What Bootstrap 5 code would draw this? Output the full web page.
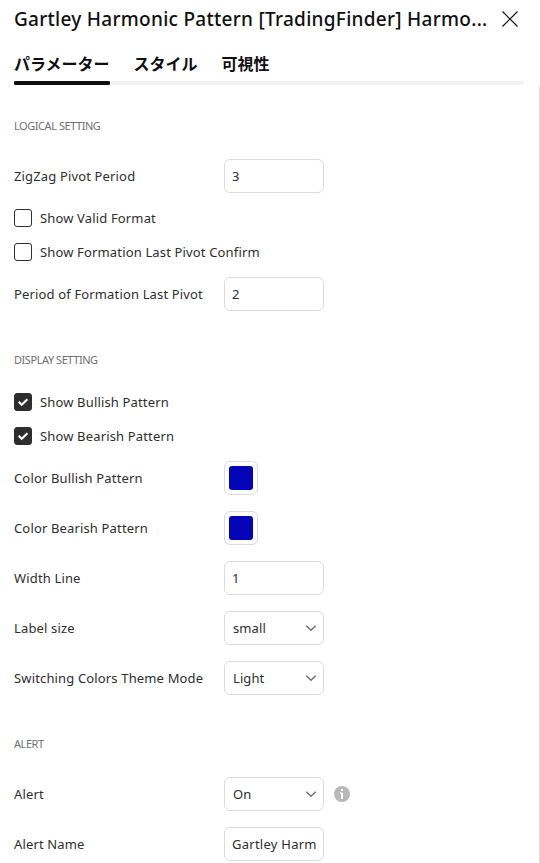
<!DOCTYPE html>
<html lang="ja">
<head>
<meta charset="utf-8">
<meta name="viewport" content="width=device-width, initial-scale=1">
<title>Gartley Harmonic Pattern</title>
<link rel="stylesheet" href="https://cdn.jsdelivr.net/npm/bootstrap@5.3.0/dist/css/bootstrap.min.css">
<style>
body{font-family:"Trebuchet MS","Noto Sans","Noto Sans CJK JP",sans-serif;font-size:13px;line-height:18px;letter-spacing:.15px;color:#2e2e2e;background:#fff}
.dialog{height:863px}
.dialog-head{height:40px;padding:0 20px 2px 14px}
.dialog-title{width:476px;font-size:19px;line-height:28px;font-weight:500;letter-spacing:.28px;color:#0f0f0f}
.close-btn{width:20px;height:20px}
.tabs{height:45px;margin:0 16px 0 14px;gap:24px;font-family:"Noto Sans CJK JP",sans-serif;line-height:24px;letter-spacing:0;font-weight:700;color:#0f0f0f;background:linear-gradient(#f2f2f2,#f2f2f2) bottom/100% 4px no-repeat}
.tabs .nav-link{padding:11px 0 6px;height:45px;color:inherit;font-size:16px}
.tabs .nav-link.active{background:radial-gradient(circle at 2px 2px,#0f0f0f 2px,transparent 2.3px) left bottom/4px 4px no-repeat,radial-gradient(circle at 2px 2px,#0f0f0f 2px,transparent 2.3px) right bottom/4px 4px no-repeat,linear-gradient(#0f0f0f,#0f0f0f) center bottom/calc(100% - 4px) 4px no-repeat}
.settings{height:778px;padding:24px 14px 0;gap:16px}
.scroll-edge{width:1px;margin-top:1px;background:#dedede}
.group-title{height:34px;font-size:11px;letter-spacing:-.45px;color:#707070}
.group-gap{margin-top:16px}
.setting{height:34px}
.setting-label{width:210px}
.field{width:100px;height:34px;padding:0 7px;border:1px solid #dbdbdb;border-radius:6px;font-size:13px;letter-spacing:.25px;color:#2e2e2e;background:#fff}
.dropdown-field{padding:0 6px 0 8px;letter-spacing:.1px}
.check-row{height:18px;gap:8px}
.check-row .form-check-input{width:18px;height:18px;margin:0;border:1px solid #2e2e2e;border-radius:3px}
.check-row .form-check-input:checked{background-color:#2e2e2e;background-image:none}
.check-box{width:18px;height:18px}
.check-box svg{left:0;top:0}
.swatch{width:34px;height:34px;padding:4px;border:1px solid #dbdbdb;border-radius:6px;background:#fff}
.swatch span{width:24px;height:24px;border-radius:3px;background:#0505b8}
.info{margin-left:10px}
</style>
<script src="https://cdn.jsdelivr.net/npm/bootstrap@5.3.0/dist/js/bootstrap.bundle.min.js"></script>
</head>
<body class="overflow-hidden">
<main class="dialog d-flex flex-column overflow-hidden">
<header class="dialog-head d-flex align-items-center justify-content-between">
<h1 class="dialog-title mb-0 text-nowrap">Gartley Harmonic Pattern [TradingFinder] Harmo...</h1>
<button class="close-btn btn p-0 border-0 d-flex" aria-label="Close"><svg width="20" height="20" viewBox="0 0 20 20" fill="none" stroke="#0f0f0f" stroke-width="1.2"><path d="M2.5 2.5l15 15M17.5 2.5l-15 15"/></svg></button>
</header>
<nav class="tabs nav flex-nowrap rounded-1">
<a class="nav-link active">パラメーター</a><a class="nav-link">スタイル</a><a class="nav-link">可視性</a>
</nav>
<div class="d-flex">
<section class="settings flex-grow-1 d-flex flex-column">
<div class="group-title d-flex align-items-center flex-shrink-0">LOGICAL SETTING</div>
<div class="setting d-flex align-items-center flex-shrink-0"><label class="setting-label">ZigZag Pivot Period</label><input class="field" value="3"></div>
<label class="check-row d-flex align-items-center flex-shrink-0"><input class="form-check-input" type="checkbox"><span>Show Valid Format</span></label>
<label class="check-row d-flex align-items-center flex-shrink-0"><input class="form-check-input" type="checkbox"><span>Show Formation Last Pivot Confirm</span></label>
<div class="setting d-flex align-items-center flex-shrink-0"><label class="setting-label">Period of Formation Last Pivot</label><input class="field" value="2"></div>
<div class="group-title group-gap d-flex align-items-center flex-shrink-0">DISPLAY SETTING</div>
<label class="check-row d-flex align-items-center flex-shrink-0"><span class="check-box d-flex position-relative"><input class="form-check-input" type="checkbox" checked><svg class="position-absolute" width="18" height="18" fill="none" stroke="#fff" stroke-width="2"><path d="M4.7 8.8l3 3 5.7-5.6"/></svg></span><span>Show Bullish Pattern</span></label>
<label class="check-row d-flex align-items-center flex-shrink-0"><span class="check-box d-flex position-relative"><input class="form-check-input" type="checkbox" checked><svg class="position-absolute" width="18" height="18" fill="none" stroke="#fff" stroke-width="2"><path d="M4.7 8.8l3 3 5.7-5.6"/></svg></span><span>Show Bearish Pattern</span></label>
<div class="setting d-flex align-items-center flex-shrink-0"><label class="setting-label">Color Bullish Pattern</label><button class="swatch d-flex" aria-label="Color"><span></span></button></div>
<div class="setting d-flex align-items-center flex-shrink-0"><label class="setting-label">Color Bearish Pattern</label><button class="swatch d-flex" aria-label="Color"><span></span></button></div>
<div class="setting d-flex align-items-center flex-shrink-0"><label class="setting-label">Width Line</label><input class="field" value="1"></div>
<div class="setting d-flex align-items-center flex-shrink-0"><label class="setting-label">Label size</label><button class="field dropdown-field d-flex align-items-center justify-content-between"><span>small</span><svg width="12" height="8" fill="none" stroke="#707070" stroke-width="1.5"><path d="M1.3 1.8L6 6.2l4.7-4.4"/></svg></button></div>
<div class="setting d-flex align-items-center flex-shrink-0"><label class="setting-label text-nowrap">Switching Colors Theme Mode</label><button class="field dropdown-field d-flex align-items-center justify-content-between"><span>Light</span><svg width="12" height="8" fill="none" stroke="#707070" stroke-width="1.5"><path d="M1.3 1.8L6 6.2l4.7-4.4"/></svg></button></div>
<div class="group-title group-gap d-flex align-items-center flex-shrink-0">ALERT</div>
<div class="setting d-flex align-items-center flex-shrink-0"><label class="setting-label">Alert</label><button class="field dropdown-field d-flex align-items-center justify-content-between"><span>On</span><svg width="12" height="8" fill="none" stroke="#707070" stroke-width="1.5"><path d="M1.3 1.8L6 6.2l4.7-4.4"/></svg></button><svg class="info" width="16" height="16"><circle cx="8" cy="8" r="8" fill="#b8b8b8"/><path d="M7 3h2v2H7zM6 6.5h3V13H7V8H6z" fill="#fff"/></svg></div>
<div class="setting d-flex align-items-center flex-shrink-0"><label class="setting-label">Alert Name</label><input class="field" value="Gartley Harm"></div>
</section>
<div class="scroll-edge"></div>
</div>
</main>
</body>
</html>
